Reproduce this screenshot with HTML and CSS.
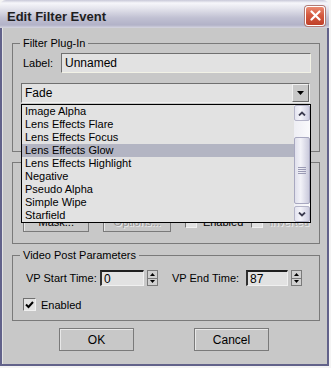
FILE: index.html
```html
<!DOCTYPE html>
<html lang="en">
<head>
  <meta charset="UTF-8">
  <title>Edit Filter Event</title>
  <link rel="stylesheet" href="styles.css">
</head>
<body>
  <div class="window">
    <div class="titlebar">
      <span class="title">Edit Filter Event</span>
      <button class="close-btn">
        <svg width="11" height="11" viewBox="0 0 11 11"><path d="M1.5 1.5 L9.5 9.5 M9.5 1.5 L1.5 9.5" stroke="#fff" stroke-width="2.2" stroke-linecap="round"/></svg>
      </button>
    </div>

    <div class="window-body">
      <fieldset class="group group-plugin">
        <legend>Filter Plug-In</legend>
        <div class="group-inner plugin-inner">
          <div class="label-row">
            <span class="label-text">Label:</span>
            <input class="text-field label-field" type="text" value="Unnamed">
          </div>

          <div class="combo">
            <div class="combo-box">
              <span>Fade</span>
              <span class="combo-arrow">
                <svg width="7" height="4" viewBox="0 0 7 4"><polygon points="0,0 7,0 3.5,4" fill="#000"/></svg>
              </span>
            </div>
            <div class="listbox">
              <ul class="list-items">
                <li>Image Alpha</li>
                <li>Lens Effects Flare</li>
                <li>Lens Effects Focus</li>
                <li class="selected">Lens Effects Glow</li>
                <li>Lens Effects Highlight</li>
                <li>Negative</li>
                <li>Pseudo Alpha</li>
                <li>Simple Wipe</li>
                <li>Starfield</li>
              </ul>
              <div class="scrollbar">
                <div class="scroll-btn">
                  <svg width="8" height="5" viewBox="0 0 8 5"><path d="M1 4.5 L4 1.5 L7 4.5" stroke="#3c3c50" stroke-width="1.8" fill="none"/></svg>
                </div>
                <div class="scroll-gap"></div>
                <div class="scroll-thumb">
                  <svg width="8" height="8" viewBox="0 0 8 8"><path d="M0 0.5 H8 M0 2.5 H8 M0 4.5 H8 M0 6.5 H8" stroke="#9a9ab4" stroke-width="1"/></svg>
                </div>
                <div class="scroll-gap-end"></div>
                <div class="scroll-btn">
                  <svg width="8" height="5" viewBox="0 0 8 5"><path d="M1 0.5 L4 3.5 L7 0.5" stroke="#3c3c50" stroke-width="1.8" fill="none"/></svg>
                </div>
              </div>
            </div>
          </div>
        </div>
      </fieldset>

      <fieldset class="group group-mask">
        <div class="group-inner mask-inner">
          <button class="btn mask-btn">Mask...</button>
          <button class="btn options-btn" disabled>Options...</button>
          <label class="check check-enabled"><span class="box"></span>Enabled</label>
          <label class="check check-disabled"><span class="box"></span>Inverted</label>
        </div>
      </fieldset>

      <fieldset class="group group-vp">
        <legend>Video Post Parameters</legend>
        <div class="group-inner vp-inner">
          <div class="vp-row">
            <span class="vp-label">VP Start Time:</span>
            <input class="text-field vp-field start-field" type="text" value="0">
            <span class="spinner">
              <span class="spin-up"><svg width="5" height="3" viewBox="0 0 5 3"><polygon points="0,3 5,3 2.5,0" fill="#000"/></svg></span>
              <span class="spin-down"><svg width="5" height="3" viewBox="0 0 5 3"><polygon points="0,0 5,0 2.5,3" fill="#000"/></svg></span>
            </span>
            <span class="vp-label end-label">VP End Time:</span>
            <input class="text-field vp-field end-field" type="text" value="87">
            <span class="spinner">
              <span class="spin-up"><svg width="5" height="3" viewBox="0 0 5 3"><polygon points="0,3 5,3 2.5,0" fill="#000"/></svg></span>
              <span class="spin-down"><svg width="5" height="3" viewBox="0 0 5 3"><polygon points="0,0 5,0 2.5,3" fill="#000"/></svg></span>
            </span>
          </div>
          <label class="check vp-check">
            <span class="box">
              <svg width="9" height="8" viewBox="0 0 9 8"><path d="M1 3.5 L3.5 6 L8 1" stroke="#000" stroke-width="2" fill="none"/></svg>
            </span>Enabled
          </label>
        </div>
      </fieldset>

      <div class="dialog-buttons">
        <button class="btn dialog-btn">OK</button>
        <button class="btn dialog-btn">Cancel</button>
      </div>
    </div>
  </div>
</body>
</html>
```

FILE: styles.css
```css
body {
  margin: 0;
  background-color: #f4f4f4;
  font-family: "Liberation Sans", Arial, sans-serif;
  font-size: 11px;
  color: #000;
}
.window {
  width: 329px;
  height: 366px;
  display: flex;
  flex-direction: column;
}
.titlebar {
  height: 28px;
  flex-shrink: 0;
  display: flex;
  align-items: center;
  justify-content: space-between;
  padding: 0 4px 0 7px;
  box-sizing: border-box;
  border-radius: 6px 6px 0 0;
  background: linear-gradient(to bottom, #c8c8d8 0, #f6f6fa 3px, #e6e6ee 8px, #c0c0d2 18px, #b2b2c8 25px, #d6d6e0 28px);
}
.title {
  font-weight: bold;
  font-size: 13px;
  color: #1e1e1e;
  padding-top: 4px;
}
.close-btn {
  width: 20px;
  height: 20px;
  margin-top: 3px;
  border: 1px solid #fff;
  border-radius: 3px;
  padding: 0;
  display: flex;
  align-items: center;
  justify-content: center;
  background: linear-gradient(to bottom, #ea8b72, #d45a40 45%, #c0402a);
  box-shadow: 0 0 0 1px #b07a74;
}
.window-body {
  flex: 1;
  background-color: #c8c8c8;
  border: solid #62628a;
  border-width: 0 2px 2px 2px;
  box-shadow: inset 1px 0 #e4e4e4;
}

/* group boxes */
.group {
  margin: 0 0 0 10px;
  width: 308px;
  box-sizing: border-box;
  padding: 0;
  border: 1px solid #7a7a7a;
  min-inline-size: 0;
}
.group legend {
  margin-left: 7px;
  padding: 0 3px;
  line-height: 13px;
}
.group-plugin {
  margin-top: 9px;
}
.plugin-inner {
  padding: 3px 8px 48px 8px;
}
.label-row {
  display: flex;
  align-items: center;
  padding-left: 2px;
}
.label-text {
  width: 38px;
}
.text-field {
  box-sizing: border-box;
  margin: 0;
  padding: 0 3px;
  font-family: inherit;
  font-size: 11px;
  background-color: #e2e2e2;
  outline: none;
}
.label-field {
  width: 250px;
  height: 20px;
  font-size: 12px;
  border: 1px solid;
  border-color: #707070 #f2f2e6 #f2f2e6 #707070;
}

/* dropdown */
.combo {
  position: relative;
  margin-top: 10px;
}
.combo-box {
  width: 289px;
  height: 20px;
  box-sizing: border-box;
  display: flex;
  align-items: center;
  justify-content: space-between;
  padding-left: 3px;
  font-size: 12px;
  background-color: #e2e2e2;
  border: 1px solid;
  border-color: #707070 #f0f0f0 #f0f0f0 #707070;
}
.combo-arrow {
  width: 17px;
  height: 18px;
  box-sizing: border-box;
  display: flex;
  align-items: center;
  justify-content: center;
  background-color: #c8c8c8;
  border: 1px solid;
  border-color: #f0f0f0 #6a6a6a #6a6a6a #f0f0f0;
}
.listbox {
  position: absolute;
  top: 21px;
  left: 0;
  z-index: 2;
  width: 290px;
  height: 119px;
  box-sizing: border-box;
  display: flex;
  background-color: #e2e2e2;
  border: 1px solid #000;
}
.list-items {
  list-style: none;
  margin: 0;
  padding: 0;
  flex: 1;
}
.list-items li {
  height: 13px;
  line-height: 13px;
  padding-left: 3px;
  white-space: nowrap;
}
.list-items .selected {
  background-color: #b3b5c3;
}
.scrollbar {
  width: 16px;
  display: flex;
  flex-direction: column;
  background: linear-gradient(to right, #eeeef4, #fafafc);
}
.scroll-btn {
  height: 16px;
  box-sizing: border-box;
  display: flex;
  align-items: center;
  justify-content: center;
  border: 1px solid #b4b4c8;
  border-radius: 2px;
  background: linear-gradient(to right, #e4e4f0, #f4f4fa 40%, #cdcde0);
}
.scroll-gap {
  height: 16px;
}
.scroll-thumb {
  height: 67px;
  box-sizing: border-box;
  display: flex;
  align-items: center;
  justify-content: center;
  border: 1px solid #a8a8c0;
  border-radius: 2px;
  background: linear-gradient(to right, #e0e0ec, #f2f2f8 40%, #cacadc);
}
.scroll-gap-end {
  flex: 1;
}

/* hidden mask group */
.group-mask {
  margin-top: 10px;
}
.mask-inner {
  display: flex;
  align-items: center;
  padding: 48px 10px 11px 10px;
}
.btn {
  height: 21px;
  margin: 0;
  padding: 0;
  font-family: inherit;
  font-size: 11px;
  color: #000;
  background-color: #c8c8c8;
  border: 1px solid;
  border-color: #7a7a7a;
  box-shadow: inset 1px 1px #e8e8e8;
}
.btn:disabled {
  color: #909090;
  text-shadow: 1px 1px #ececec;
}
.mask-btn { width: 67px; }
.options-btn { width: 68px; margin-left: 14px; }
.check {
  display: flex;
  align-items: center;
  gap: 6px;
}
.box {
  width: 12px;
  height: 12px;
  box-sizing: border-box;
  display: flex;
  align-items: center;
  justify-content: center;
  background-color: #e2e2e2;
  border: 1px solid;
  border-color: #707070 #f0f0f0 #f0f0f0 #707070;
}
.check-enabled { margin-left: 14px; }
.check-disabled {
  margin-left: 8px;
  color: #a4a4a4;
  text-shadow: 1px 1px #ececec;
}

/* video post group */
.group-vp {
  margin-top: 5px;
}
.vp-inner {
  padding: 8px 10px 9px 10px;
}
.vp-row {
  display: flex;
  align-items: center;
  padding-left: 3px;
}
.vp-label {
  width: 74px;
  white-space: nowrap;
}
.end-label {
  margin-left: 14px;
}
.vp-field {
  height: 16px;
  padding: 0 2px;
  font-size: 12px;
  border: solid;
  border-width: 2px 1px 1px 2px;
  border-color: #202020 #f0f0f0 #f0f0f0 #303030;
}
.start-field { width: 44px; }
.end-field { width: 42px; }
.spinner {
  width: 11px;
  height: 16px;
  margin-left: 3px;
  box-sizing: border-box;
  display: flex;
  flex-direction: column;
  border: 1px solid #7a7a7a;
  background-color: #d0d0d0;
}
.spin-up, .spin-down {
  flex: 1;
  display: flex;
  align-items: center;
  justify-content: center;
}
.spin-up {
  border-bottom: 1px solid #7a7a7a;
}
.vp-check {
  margin-top: 12px;
  gap: 5px;
}
.vp-check .box {
  width: 13px;
  height: 13px;
}

.dialog-buttons {
  display: flex;
  gap: 60px;
  margin-top: 7px;
  padding-left: 57px;
}
.dialog-btn {
  width: 75px;
  height: 23px;
  font-size: 12px;
}
```
